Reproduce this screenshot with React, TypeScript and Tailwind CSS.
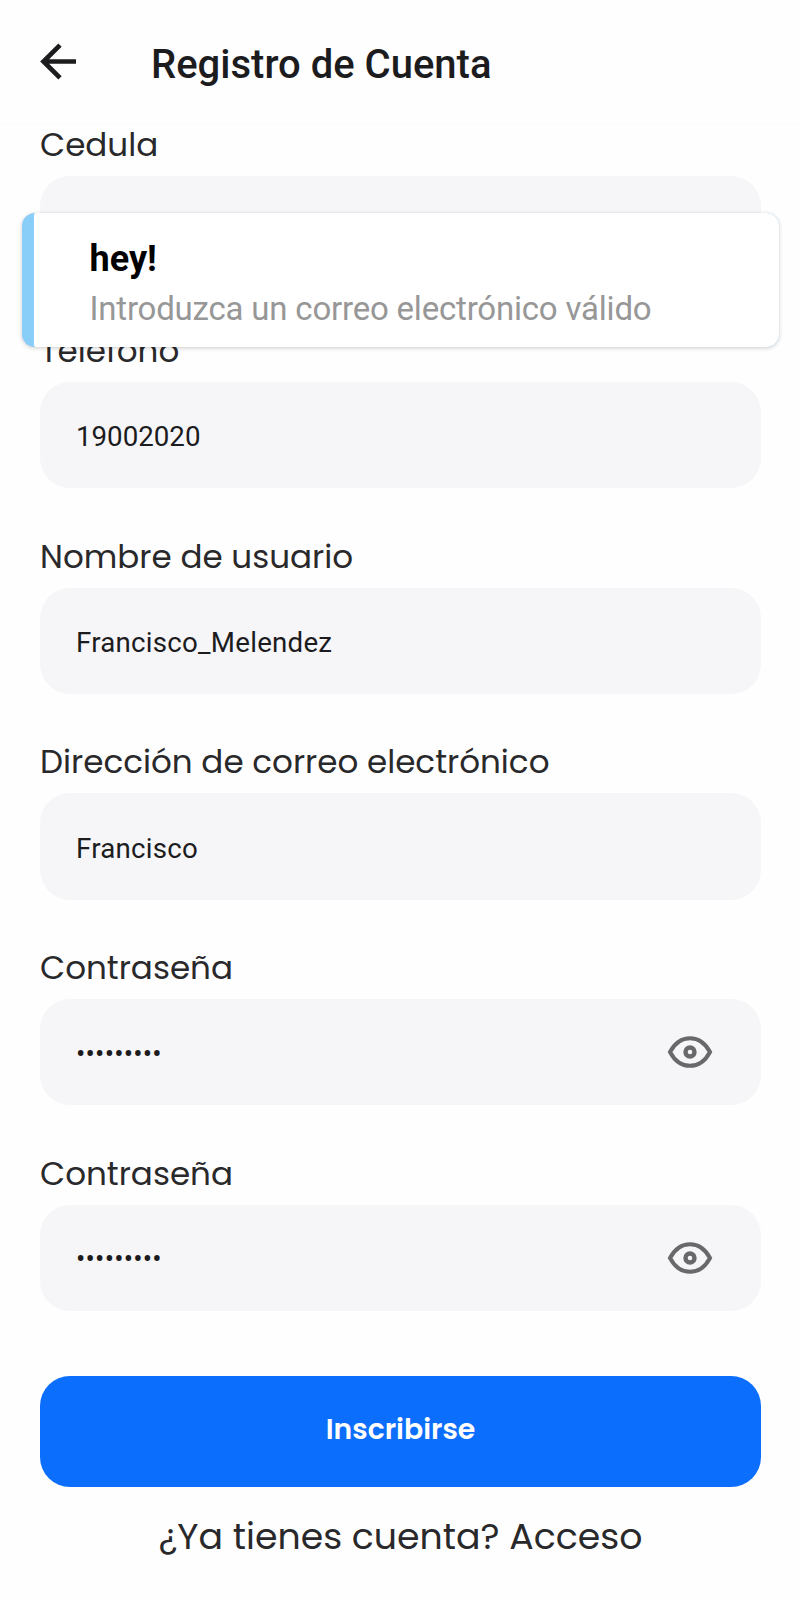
import React from "react";

type FieldProps = {
  label: string;
  value?: string;
  secret?: boolean;
  valueClass?: string;
};

const labelFont = "font-[Poppins,Inter,sans-serif]";

function EyeIcon() {
  return (
    <svg width="46" height="34" viewBox="0 0 46 34" fill="none" stroke="#69696b" strokeWidth="4" strokeLinejoin="miter" aria-hidden="true">
      <path d="M3 17C7.600 8.300 14.500 3.200 23 3.200S38.400 8.300 43 17C38.400 25.700 31.500 30.800 23 30.800S7.600 25.700 3 17Z" />
      <circle cx="23" cy="17" r="4.500" strokeWidth="4.400" />
    </svg>
  );
}

function Field({ label, value, secret, valueClass = "" }: FieldProps) {
  return (
    <div className="h-[205.700px]">
      <div className={`${labelFont} h-[51px] whitespace-nowrap text-[32.600px] leading-[40.500px] text-[#29292b]`}>
        {label}
      </div>
      <div className="flex h-[106.400px] items-center justify-between rounded-[30px] bg-[#f6f6f8] pl-9 pr-12">
        <span className={`${secret ? "pt-[3px]" : "pt-[4px]"} font-[Roboto,sans-serif] text-[27.700px] leading-[36px] text-[#1c1c1e] ${valueClass}`}>
          {value}
        </span>
        {secret && <EyeIcon />}
      </div>
    </div>
  );
}

export default function App() {
  return (
    <div className="relative h-[1600px] w-[801px] overflow-hidden bg-[#fefefe]">
      <header className="flex h-[125.300px] items-start border-b border-[#fbfbfb] bg-[#fefefe] pl-10">
        <svg className="mt-[43px]" width="37" height="37" viewBox="0 0 37 37" fill="none" stroke="#1c1c1e" strokeWidth="4.700" aria-hidden="true">
          <path d="M36 18.500H3M20 2.200L3.500 18.500L20 34.800" />
        </svg>
        <h1 className="ml-[74px] mt-[41px] whitespace-nowrap font-[Roboto,sans-serif] text-[40px] font-medium leading-[48px] text-[#1c1c1e]">
          Registro de Cuenta
        </h1>
      </header>

      <main className="px-10">
        <Field label="Cedula" />
        <Field label="Telefono" value="19002020" />
        <Field label="Nombre de usuario" value="Francisco_Melendez" valueClass="tracking-[0.240px]" />
        <Field label="Dirección de correo electrónico" value="Francisco" valueClass="tracking-[0.240px]" />
        <Field label="Contraseña" value="•••••••••" valueClass="tracking-[0.200px]" secret />
        <Field label="Contraseña" value="•••••••••" valueClass="tracking-[0.200px]" secret />
        <button className="mt-[16.700px] flex h-[111px] w-full items-center justify-center rounded-[30px] bg-[#0c6efd] pb-[5px] text-[28.300px] font-semibold text-white">
          <span className={labelFont}>Inscribirse</span>
        </button>
        <p className={`${labelFont} mt-[28px] text-center text-[36.300px] leading-[44px] text-[#29292b]`}>
          ¿Ya tienes cuenta? Acceso
        </p>
      </main>

      <div role="alert" className="absolute left-[22px] top-[213px] flex h-[134px] w-[757px] overflow-hidden rounded-[13px] bg-[#89cef9] shadow-[0_1px_4px_rgba(0,0,0,0.2)]">
        <div className="ml-[11.500px] flex-1 rounded-l-[2px] bg-white pl-[56px]">
          <p className="mt-[24px] whitespace-nowrap font-[Roboto,sans-serif] text-[36px] font-bold leading-[44px] text-black">hey!</p>
          <p className="mt-[8px] whitespace-nowrap font-[Roboto,sans-serif] text-[33px] leading-[40px] tracking-[-0.200px] text-[#979797]">
            Introduzca un correo electrónico válido
          </p>
        </div>
      </div>
    </div>
  );
}
